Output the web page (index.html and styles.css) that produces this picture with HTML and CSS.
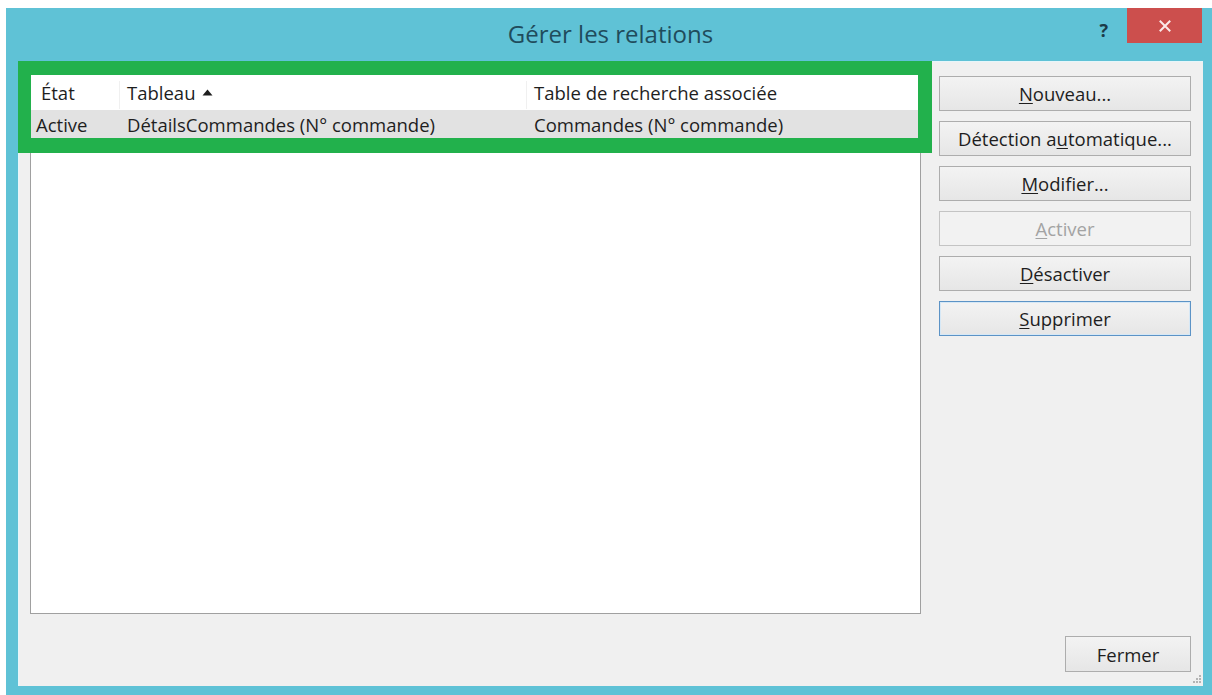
FILE: index.html
```html
<!DOCTYPE html>
<html lang="fr">
<head>
<meta charset="utf-8">
<title>Gérer les relations</title>
<link rel="stylesheet" href="styles.css">
</head>
<body>
<div class="window">
  <div class="titlebar">
    <div class="title">Gérer les relations</div>
    <div class="caption-buttons">
      <span class="help">?</span>
      <span class="close">
        <svg width="12" height="12" viewBox="0 0 12 12"><path d="M1.5 1.5 L10.5 10.5 M10.5 1.5 L1.5 10.5" stroke="#fbeaea" stroke-width="2" stroke-linecap="square"/></svg>
      </span>
    </div>
  </div>
  <div class="client">
    <div class="main">
      <div class="list">
        <div class="row head">
          <div class="cell c1">État</div>
          <div class="cell c2">Tableau <svg class="sort" width="11" height="7" viewBox="0 0 11 7"><path d="M5.5 0.5 L10.5 6.5 L0.5 6.5 Z" fill="#1e1e1e"/></svg></div>
          <div class="cell c3">Table de recherche associée</div>
        </div>
        <div class="row data selected">
          <div class="cell c1">Active</div>
          <div class="cell c2">DétailsCommandes (N° commande)</div>
          <div class="cell c3">Commandes (N° commande)</div>
        </div>
        <div class="highlight"></div>
      </div>
      <div class="actions">
        <button class="btn"><u>N</u>ouveau...</button>
        <button class="btn">Détection a<u>u</u>tomatique...</button>
        <button class="btn"><u>M</u>odifier...</button>
        <button class="btn disabled"><u>A</u>ctiver</button>
        <button class="btn"><u>D</u>ésactiver</button>
        <button class="btn default"><u>S</u>upprimer</button>
      </div>
    </div>
    <div class="footer">
      <button class="btn close-btn">Fermer</button>
      <svg class="grip" width="10" height="10" viewBox="0 0 10 10">
        <g fill="#b4b4b4">
          <rect x="7" y="1" width="2" height="2"/>
          <rect x="4" y="4" width="2" height="2"/><rect x="7" y="4" width="2" height="2"/>
          <rect x="1" y="7" width="2" height="2"/><rect x="4" y="7" width="2" height="2"/><rect x="7" y="7" width="2" height="2"/>
        </g>
      </svg>
    </div>
  </div>
</div>
</body>
</html>
```
FILE: styles.css
```css
html, body {
  margin: 0;
  padding: 0;
  background: #ffffff;
  overflow: hidden;
}

body {
  font-family: "Open Sans", "Noto Sans", "DejaVu Sans", sans-serif;
  color: #1e1e1e;
}

.window {
  margin: 8px 0 0 6px;
  width: 1206px;
  height: 690px;
  background: #5fc2d6;
  box-sizing: border-box;
  padding: 0 9px 0 12px;
  display: flex;
  flex-direction: column;
}

.titlebar {
  height: 53px;
  flex: none;
  position: relative;
  display: flex;
  align-items: center;
  justify-content: center;
}

.title {
  font-size: 24px;
  color: #1f4c5c;
  margin-top: -3px;
}

.caption-buttons {
  position: absolute;
  right: -9px;
  top: 0;
  display: flex;
  align-items: flex-start;
}

.help {
  font-size: 18px;
  font-weight: 700;
  color: #1c3b48;
  margin-right: 19px;
  margin-top: 13px;
  line-height: 1;
}

.close {
  width: 75px;
  height: 35px;
  background: #cc4f4d;
  margin-right: 10px;
  display: flex;
  align-items: center;
  justify-content: center;
}

.client {
  width: 1185px;
  height: 625px;
  flex: none;
  background: #f0f0f0;
  box-shadow: inset 1px 1px 0 #e6f6fa;
  box-sizing: border-box;
  padding: 13px 12px 14px 12px;
  display: flex;
  flex-direction: column;
}

.main {
  display: flex;
  gap: 18px;
  height: 540px;
}

.list {
  width: 891px;
  height: 540px;
  box-sizing: border-box;
  border: 1px solid #a0a0a0;
  background: #ffffff;
  position: relative;
  font-size: 18.5px;
}

.row {
  display: flex;
}

.head {
  height: 35px;
  align-items: flex-end;
  padding-bottom: 1px;
  box-sizing: border-box;
}

.head .cell {
  height: 28px;
  line-height: 24px;
}

.head .c1,
.head .c2 {
  border-right: 1px solid #f0f0f0;
}

.data {
  height: 28px;
  align-items: center;
}

.selected {
  background: #e2e2e2;
  margin-right: 2px;
}

.cell {
  box-sizing: border-box;
  white-space: nowrap;
}

.c1 { width: 89px; padding-left: 10px; }
.c2 { width: 407px; padding-left: 7px; }
.c3 { flex: 1; padding-left: 7px; }

.data .c1 { padding-left: 5px; }

.sort {
  position: relative;
  top: -4px;
  margin-left: 2px;
}

/* green callout frame drawn over the list header */
.highlight {
  position: absolute;
  left: -13px;
  top: -14px;
  width: 914px;
  height: 92px;
  border-style: solid;
  border-color: #22b14c;
  border-width: 14px 14px 15px 13px;
  box-sizing: border-box;
  pointer-events: none;
}

.actions {
  padding-top: 2px;
  display: flex;
  flex-direction: column;
  gap: 10px;
  width: 252px;
}

.btn {
  height: 35px;
  width: 252px;
  box-sizing: border-box;
  border: 1px solid #adadad;
  background: linear-gradient(#f3f3f3, #e6e6e6);
  font-family: inherit;
  font-size: 18.5px;
  color: #1e1e1e;
  padding: 0;
  margin: 0;
  white-space: nowrap;
}

.btn u {
  text-underline-offset: 2px;
}

.btn.disabled {
  color: #a3a3a3;
  border-color: #c4c4c4;
  background: #f2f2f2;
}

.btn.default {
  border-color: #5c93c6;
  box-shadow: inset 0 0 0 1px #d6e8f6;
}

.footer {
  margin-top: 22px;
  height: 36px;
  display: flex;
  justify-content: flex-end;
  position: relative;
}

.close-btn {
  width: 126px;
  height: 36px;
}

.grip {
  position: absolute;
  right: -11px;
  bottom: -12px;
}
```
